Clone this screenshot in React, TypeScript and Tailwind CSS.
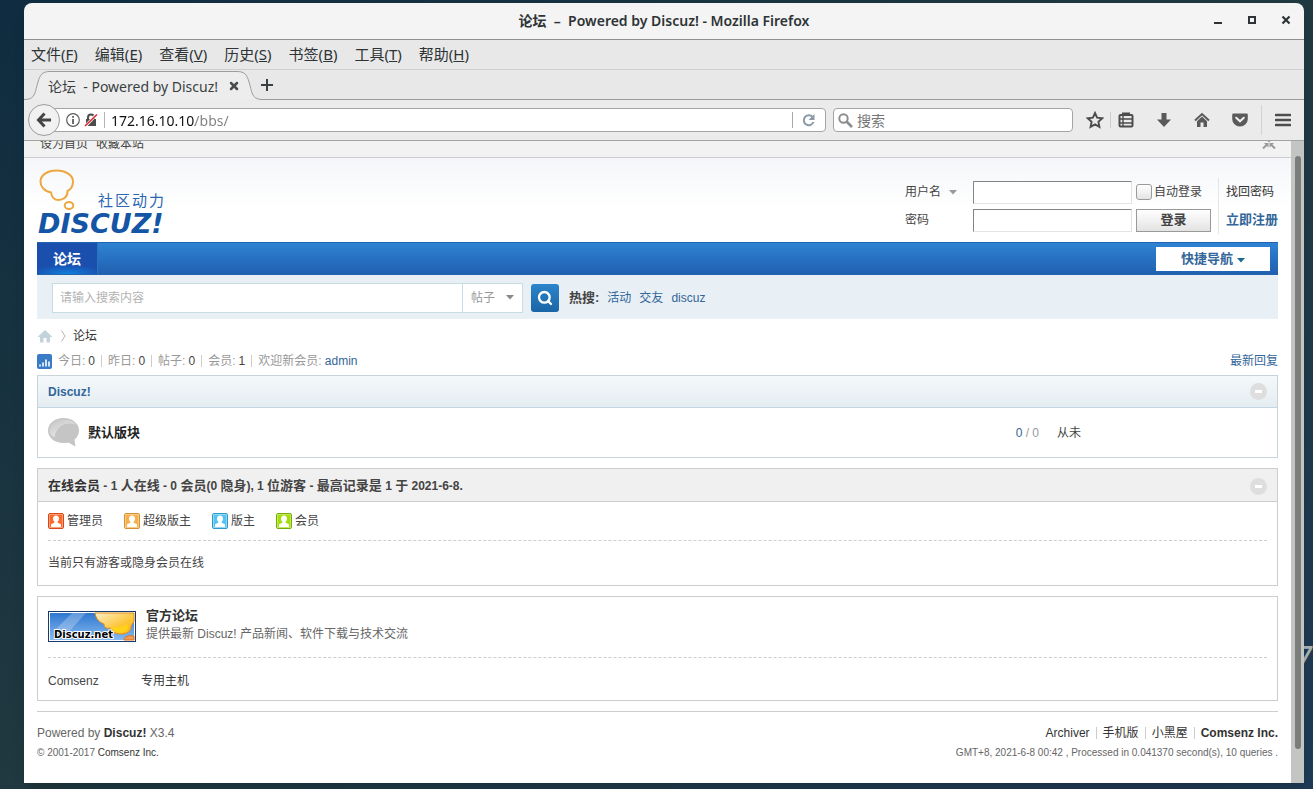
import type { ReactNode } from "react";
import { Search, X } from "lucide-react";

const menus = [
  { label: "文件", key: "F" },
  { label: "编辑", key: "E" },
  { label: "查看", key: "V" },
  { label: "历史", key: "S" },
  { label: "书签", key: "B" },
  { label: "工具", key: "T" },
  { label: "帮助", key: "H" },
];

const stats = [
  { label: "今日", value: 0 },
  { label: "昨日", value: 0 },
  { label: "帖子", value: 0 },
  { label: "会员", value: 1 },
];

const groups = [
  { name: "管理员", fill: "#fb6a2c", edge: "#d9481a" },
  { name: "超级版主", fill: "#f5b04c", edge: "#d58f35" },
  { name: "版主", fill: "#55c3f0", edge: "#3099cc" },
  { name: "会员", fill: "#a5dc0c", edge: "#74ad08" },
];

const TitleBar = () => (
  <header className="flex h-[37px] items-center border-b border-[#8f918f] bg-[#f4f4f4] pb-0.5 pl-[103px] pr-px">
    <h1 className="flex-1 text-center text-[14px] font-semibold text-[#2e3436]">
      论坛 &nbsp;– &nbsp;Powered by Discuz! - Mozilla Firefox
    </h1>
    <div className="flex">
      <button aria-label="最小化" className="flex w-[34px] justify-center">
        <svg width="10" height="10" viewBox="0 0 10 10"><path d="M1 8h8" stroke="#2e3436" strokeWidth="2" /></svg>
      </button>
      <button aria-label="最大化" className="flex w-[34px] justify-center">
        <svg width="10" height="10" viewBox="0 0 10 10"><path d="M2 2h6v6H2z" fill="none" stroke="#2e3436" strokeWidth="2" /></svg>
      </button>
      <button aria-label="关闭" className="flex w-[34px] justify-center">
        <svg width="10" height="10" viewBox="0 0 10 10"><path d="M1.500 1.500l7 7M8.500 1.500l-7 7" stroke="#2e3436" strokeWidth="2.200" /></svg>
      </button>
    </div>
  </header>
);

const MenuBar = () => (
  <nav className="flex h-[30px] items-center gap-[17px] border-b border-[#cfcfcf] bg-[#e8e8e8] px-[7px] text-[15px] text-[#2e3436]">
    {menus.map((m) => (
      <button key={m.key} className="whitespace-nowrap">
        {m.label}(<span className="underline">{m.key}</span>)
      </button>
    ))}
  </nav>
);

const TabBar = () => (
  <div className="flex h-[30px] bg-[#e8e8e8]">
    <div className="relative w-[238px]">
      <svg className="absolute inset-0" width="238" height="30" viewBox="0 0 238 30">
        <path
          d="M0 29.500H1C12 29.500 11 21 14 12C16 5 18 1.500 26 1.500H213C221 1.500 223 5 225 12C228 21 227 29.500 238 29.500"
          fill="#ededed"
          stroke="#9b9d9b"
        />
      </svg>
      <div className="relative flex h-full items-center justify-between pl-6 pr-[22px] pt-0.5">
        <span className="whitespace-nowrap text-[14px] text-[#3a3f41]">论坛 &nbsp;- Powered by Discuz!</span>
        <button aria-label="关闭标签页">
          <X className="h-3 w-3 text-[#4a4d4e]" strokeWidth={5} />
        </button>
      </div>
    </div>
    <div className="flex flex-1 items-center border-b border-[#9b9d9b]">
      <button aria-label="新建标签页" className="-ml-px">
        <svg width="12" height="12" viewBox="0 0 12 12"><path d="M6 0v12M0 6h12" stroke="#3a3f41" strokeWidth="2" /></svg>
      </button>
    </div>
  </div>
);

const ToolButton = ({ label, children }: { label: string; children: ReactNode }) => (
  <button aria-label={label} className="flex w-[38px] shrink-0 justify-center">
    {children}
  </button>
);

const NavBar = () => (
  <div className="flex h-[41px] items-center border-b border-[#a3a5a3] bg-[#ebebeb] pl-1 pr-0.5">
    <button
      aria-label="后退"
      className="z-10 flex h-8 w-8 shrink-0 items-center justify-center rounded-full border border-[#9c9e9c] bg-[#f1f1f1]"
    >
      <svg width="16" height="16" viewBox="0 0 16 16">
        <path d="M8.500 1.500L2.500 8l6 6.500M3 8h12" fill="none" stroke="#454545" strokeWidth="3" />
      </svg>
    </button>
    <div className="-ml-2 flex h-6 flex-1 items-center rounded-r-sm border border-[#a3a5a3] bg-white pl-[13px]">
      <svg width="14" height="14" viewBox="0 0 14 14" className="shrink-0">
        <circle cx="7" cy="7" r="6.300" fill="none" stroke="#5c5c5c" strokeWidth="1.200" />
        <path d="M7 6v5M7 3v1.800" stroke="#5c5c5c" strokeWidth="1.800" />
      </svg>
      <svg width="14" height="14" viewBox="0 0 14 14" className="ml-1 shrink-0">
        <path d="M2 6h10v7H2z" fill="#4d4d4d" />
        <path d="M4 7V4.500a3 3 0 0 1 6 0V7" fill="none" stroke="#4d4d4d" strokeWidth="2" />
        <path d="M1 13.500L13 1" stroke="#fff" strokeWidth="3" />
        <path d="M1 13L13 1.500" stroke="#d92b34" strokeWidth="1.600" />
      </svg>
      <span className="mx-[6px] h-4 w-px shrink-0 bg-[#b5b5b5]" />
      <input
        aria-label="网址"
        defaultValue="172.16.10.10/bbs/"
        className="min-w-0 flex-1 bg-linear-to-r from-[#111111] from-[84px] to-[#808080] to-[84px] bg-clip-text text-[14px] text-transparent outline-none"
      />
      <button aria-label="刷新" className="flex h-4 w-[33px] items-center justify-center border-l border-[#a8a8a8]">
        <svg width="14" height="14" viewBox="0 0 14 14">
          <path d="M11 4.500A5 5 0 1 0 11.500 9" fill="none" stroke="#8c99a8" strokeWidth="2" />
          <path d="M12.500 1v6h-6z" fill="#8c99a8" />
        </svg>
      </button>
    </div>
    <div className="ml-[7px] flex h-6 w-60 shrink-0 items-center gap-1 rounded-sm border border-[#a3a5a3] bg-white px-1">
      <svg width="15" height="15" viewBox="0 0 15 15">
        <circle cx="5.500" cy="5.500" r="4.200" fill="none" stroke="#8d8d8d" strokeWidth="2" />
        <path d="M8.500 8.500L14 14" stroke="#8d8d8d" strokeWidth="2.600" />
      </svg>
      <input aria-label="搜索" placeholder="搜索" className="min-w-0 flex-1 text-[14px] outline-none placeholder:text-[#757575]" />
    </div>
    <button aria-label="收藏" className="ml-[7px] flex w-[30px] shrink-0 justify-center">
      <svg width="18" height="18" viewBox="0 0 18 18">
        <path d="M9 2l2.100 4.700 5.100.6-3.800 3.500 1 5.100L9 13.400l-4.400 2.500 1-5.100L1.800 7.300l5.100-.6z" fill="none" stroke="#4d4d4d" strokeWidth="1.900" />
      </svg>
    </button>
    <span className="-mr-1 h-4 w-px bg-[#cccccc]" />
    <ToolButton label="书签列表">
      <svg width="16" height="16" viewBox="0 0 16 16">
        <path d="M5 3V1.500h6V3" fill="none" stroke="#4d4d4d" strokeWidth="2" />
        <rect x="1.500" y="3" width="13" height="11.500" rx="1" fill="none" stroke="#4d4d4d" strokeWidth="2" />
        <path d="M5 3v11M1 7h14M1 11h14" stroke="#4d4d4d" strokeWidth="1.400" />
      </svg>
    </ToolButton>
    <ToolButton label="下载">
      <svg width="16" height="16" viewBox="0 0 16 16"><path d="M5.500 1h5v6.500H15L8 15 1 7.500h4.500z" fill="#5a5a5a" /></svg>
    </ToolButton>
    <ToolButton label="主页">
      <svg width="16" height="16" viewBox="0 0 16 16">
        <path d="M1 8.500L8 2l7 6.500" fill="none" stroke="#5a5a5a" strokeWidth="2" />
        <path d="M8 4.500l5 4.700V15H9.500v-4.500h-3V15H3V9.200z" fill="#5a5a5a" />
      </svg>
    </ToolButton>
    <ToolButton label="Pocket">
      <svg width="16" height="16" viewBox="0 0 16 16">
        <path d="M1.500 1.500h13q1.300 0 1.300 1.300V7a7.800 7.600 0 0 1-15.600 0V2.800q0-1.300 1.300-1.300z" fill="#5a5a5a" />
        <path d="M4.200 5.700L8 9.300l3.800-3.600" fill="none" stroke="#f0f0f0" strokeWidth="2" strokeLinecap="round" />
      </svg>
    </ToolButton>
    <span className="mx-0.5 h-[30px] w-px bg-[#d2d2d2]" />
    <ToolButton label="打开菜单">
      <svg width="16" height="14" viewBox="0 0 16 14"><path d="M1 2h14M1 7h14M1 12h14" stroke="#4d4d4d" strokeWidth="2.600" strokeLinecap="round" /></svg>
    </ToolButton>
  </div>
);

const Logo = () => (
  <a href="#" aria-label="Discuz! 社区动力">
    <svg width="136" height="74" viewBox="0 0 136 74">
      <path
        d="M14 24.500C6 23 3.500 17.500 3.500 13.500C3.500 7 10.500 2.500 19.500 2.500S36 7 36 13.500C36 18 33.500 21.500 30.500 23C31 29 26 32 21.500 32C17.500 32 14.500 29 14 24.500z"
        fill="none"
        stroke="#eca741"
        strokeWidth="2"
      />
      <ellipse cx="32" cy="37.500" rx="4.300" ry="3.500" fill="none" stroke="#eca741" strokeWidth="2" />
      <text x="61" y="38" fontSize="15" letterSpacing="2" fill="#2a66b1" fontFamily="Noto Sans CJK SC, sans-serif">社区动力</text>
      <text x="1" y="65" fontSize="27" fontWeight="700" fontStyle="italic" fill="#1455a5" fontFamily="DejaVu Sans, sans-serif">DISCUZ!</text>
    </svg>
  </a>
);

const LoginForm = () => (
  <form className="flex" onSubmit={(e) => e.preventDefault()}>
    <div className="grid grid-cols-[68px_163px_75px] items-center">
      <div className="flex h-7 items-center">
        <select aria-label="登录方式" className="appearance-none text-[#444444]">
          <option>用户名</option>
          <option>UID</option>
        </select>
        <svg width="8" height="5" viewBox="0 0 8 5" className="ml-[7px]"><path d="M0 0h8L4 4.500z" fill="#999" /></svg>
      </div>
      <input aria-label="用户名" className="h-[23px] w-[159px] border border-[#e3e3e3] border-t-[#848484] border-l-[#848484] bg-white px-1" />
      <label className="flex items-center gap-0.5 whitespace-nowrap">
        <input type="checkbox" className="h-4 w-4 appearance-none rounded-[3px] border border-[#9a9a9a] bg-linear-to-b from-white to-[#e4e4e4]" />
        自动登录
      </label>
      <label htmlFor="password" className="flex h-7 items-center">密码</label>
      <input id="password" type="password" className="h-[23px] w-[159px] border border-[#e3e3e3] border-t-[#848484] border-l-[#848484] bg-white px-1" />
      <button className="h-[23px] border border-[#999999] bg-linear-to-b from-white to-[#e3e3e3] text-[13px] font-bold">登录</button>
    </div>
    <div className="ml-[7px] border-l border-[#e5e5e5] pl-[7px]">
      <a href="#" className="flex h-7 items-center text-[#333333]">找回密码</a>
      <a href="#" className="flex h-7 items-center text-[13px] font-bold text-[#336699]">立即注册</a>
    </div>
  </form>
);

const SearchBar = () => (
  <div className="flex h-11 items-center bg-[#e8eff5] pl-[15px] pt-px">
    <div className="flex h-[30px] items-center border border-[#c9dbe3] bg-white">
      <input aria-label="搜索内容" placeholder="请输入搜索内容" className="w-[409px] px-[7px] outline-none placeholder:text-[#b3b3b3]" />
      <div className="flex h-full items-center border-l border-[#c9dbe3] px-2">
        <select aria-label="搜索类型" className="appearance-none text-[#999999]">
          <option>帖子</option>
          <option>用户</option>
        </select>
        <svg width="8" height="5" viewBox="0 0 8 5" className="ml-[10px]"><path d="M0 0h8L4 4.500z" fill="#888" /></svg>
      </div>
    </div>
    <button aria-label="搜索" className="ml-2 flex h-7 w-7 items-center justify-center rounded-[3px] bg-linear-to-b from-[#2d85cb] to-[#1a65a6]">
      <Search className="h-4 w-4 text-white" strokeWidth={3.500} />
    </button>
    <div className="ml-[10px] flex items-center gap-2 text-[#336699]">
      <strong className="text-[13px] text-[#444444]">热搜:</strong>
      <a href="#">活动</a>
      <a href="#">交友</a>
      <a href="#">discuz</a>
    </div>
  </div>
);

const CollapseButton = () => (
  <button aria-label="收起/展开" className="mr-[10px]">
    <svg width="17" height="17" viewBox="0 0 17 17">
      <circle cx="8.500" cy="8.500" r="8.500" fill="#dedede" />
      <path d="M5 8.500h7" stroke="#fff" strokeWidth="3" />
    </svg>
  </button>
);

const GroupIcon = ({ fill, edge }: { fill: string; edge: string }) => (
  <svg width="16" height="16" viewBox="0 0 16 16">
    <rect x=".5" y=".5" width="15" height="15" rx="1.500" fill={fill} stroke={edge} />
    <rect x="1.500" y="1.500" width="13" height="13" fill="none" stroke="#fff" strokeOpacity=".35" />
    <path d="M8 2.500c2 0 3 1.400 3 3.200 0 1.300-.6 2.300-1.300 2.900v1.200l3.300 1.400V14H3v-2.800l3.300-1.400V8.600C5.600 8 5 7 5 5.700c0-1.800 1-3.200 3-3.200z" fill="#fff" />
  </svg>
);

const ForumPanel = () => (
  <section className="border border-[#c9d3d9]">
    <div className="flex h-8 items-center justify-between border-b border-[#c2d5e3] bg-linear-to-b from-[#f4f8fa] to-[#e5edf2] pl-[10px]">
      <h2 className="font-bold text-[#336699]"><a href="#">Discuz!</a></h2>
      <CollapseButton />
    </div>
    <table className="w-full table-fixed">
      <tbody>
        <tr className="h-[49px]">
          <td className="w-[50px] pl-[10px]">
            <svg width="31" height="29" viewBox="0 0 31 29">
              <defs>
                <linearGradient id="gloss" x1="0" y1="0" x2=".7" y2="1">
                  <stop offset="0" stopColor="#c4c4c4" />
                  <stop offset="1" stopColor="#ececec" />
                </linearGradient>
              </defs>
              <path d="M15.500 0C24.500 0 31 5.500 31 12.500c0 4-2 7-4.500 9.200L27.500 28.500l-7.300-4c-1.500.4-3 .5-4.700.5C6.500 25 0 19.500 0 12.500S6.500 0 15.500 0z" fill="#c5c5c5" />
              <path d="M1.500 12.500C1.500 6 8 1.500 15.500 1.500c6 0 10 2 12.500 5C20 3.500 8 7 6.500 19.500 3.500 18 1.500 15.500 1.500 12.500z" fill="url(#gloss)" />
            </svg>
          </td>
          <td><a href="#" className="text-[13px] font-bold text-[#222222]">默认版块</a></td>
          <td className="w-[120px] pr-[18px] text-right text-[#999999]"><span className="text-[#336699]">0</span> / 0</td>
          <td className="w-[220px]">从未</td>
        </tr>
      </tbody>
    </table>
  </section>
);

// Chinese runs of a heading are set a size larger than its Latin ones
const MixedText = ({ text }: { text: string }) => (
  <>
    {text.split(/([\u4e00-\u9fff]+)/).map((part, i) =>
      i % 2 === 1 ? <span key={i} className="text-[13px]">{part}</span> : part
    )}
  </>
);

const OnlinePanel = () => (
  <section className="mt-[10px] border border-[#cdcdcd]">
    <div className="flex h-[33px] items-center justify-between border-b border-[#cdcdcd] bg-[#f0f0f0] pl-[10px] pt-0.5">
      <h3 className="font-bold text-[#444444]">
        <a href="#" className="text-[#333333]"><MixedText text="在线会员" /></a>
        <MixedText text=" - 1 人在线 - 0 会员(0 隐身), 1 位游客 - 最高记录是 1 于 2021-6-8." />
      </h3>
      <CollapseButton />
    </div>
    <div className="px-[10px]">
      <ul className="flex h-[39px] items-center gap-[21px] border-b border-dashed border-[#cdcdcd]">
        {groups.map((g) => (
          <li key={g.name} className="flex items-center gap-[3px]">
            <GroupIcon fill={g.fill} edge={g.edge} />
            {g.name}
          </li>
        ))}
      </ul>
      <p className="flex h-11 items-center">当前只有游客或隐身会员在线</p>
    </div>
  </section>
);

const LinksPanel = () => (
  <section className="mt-[10px] border border-[#cdcdcd] px-[10px]">
    <div className="flex items-start gap-[10px] border-b border-dashed border-[#cdcdcd] pb-[14px] pt-[14px]">
      <svg width="88" height="32" viewBox="0 0 88 32">
        <defs>
          <linearGradient id="sky" x1="0" y1="0" x2="0" y2="1">
            <stop offset="0" stopColor="#2f78d0" />
            <stop offset="1" stopColor="#86b9f0" />
          </linearGradient>
          <linearGradient id="sun" x1="0" y1="0" x2="1" y2="1">
            <stop offset="0" stopColor="#fdeecb" />
            <stop offset=".6" stopColor="#fdc63c" />
            <stop offset="1" stopColor="#fbb010" />
          </linearGradient>
        </defs>
        <rect x=".5" y=".5" width="87" height="30" fill="#fff" stroke="#173a6c" />
        <rect x="2" y="2" width="84" height="27" fill="url(#sky)" />
        <path d="M24 2h14L18 24 6 20z" fill="#fff" fillOpacity=".25" />
        <path d="M47 2h39v9c-2 1-2 3-3 5 0 5-5 7-10 7-6 0-9-2-11-6-3 1-6 0-6-4-5-2-8-5-9-11z" fill="url(#sun)" stroke="#e08c1e" />
        <path d="M64 15c4 2 12 1 15-2 3 5-1 9-6 9-4 0-8-2-9-7z" fill="#ffd21a" />
        <path d="M76 29c0-4 5-5 10-4v4z" fill="#ee9a52" stroke="#d9722a" />
        <text x="6" y="27" fontSize="10" fontWeight="700" fontFamily="DejaVu Sans, sans-serif" fill="#000" stroke="#fff" strokeWidth="2" paintOrder="stroke">Discuz.net</text>
      </svg>
      <div className="-mt-1 leading-[18px]">
        <h4 className="text-[13px] font-bold text-[#333333]"><a href="#">官方论坛</a></h4>
        <p className="text-[#666666]">提供最新 Discuz! 产品新闻、软件下载与技术交流</p>
      </div>
    </div>
    <ul className="flex h-[42px] items-center pt-1">
      <li className="w-[93px]"><a href="#">Comsenz</a></li>
      <li><a href="#" className="text-[#333333]">专用主机</a></li>
    </ul>
  </section>
);

const Divider = () => <span className="h-3 w-px bg-[#cccccc]" />;

const Footer = () => (
  <footer className="mt-[10px] flex justify-between border-t border-[#cdcdcd] pb-4 pt-[11px] text-[#666666]">
    <div>
      <p className="leading-5">Powered by <strong className="text-[#333333]">Discuz!</strong> X3.4</p>
      <p className="text-[10px] leading-5">© 2001-2017 <a href="#" className="text-[#333333]">Comsenz Inc.</a></p>
    </div>
    <div className="text-right">
      <p className="flex h-5 items-center justify-end gap-[6px] text-[#333333]">
        <a href="#">Archiver</a>
        <Divider />
        <a href="#">手机版</a>
        <Divider />
        <a href="#">小黑屋</a>
        <Divider />
        <a href="#" className="font-bold">Comsenz Inc.</a>
      </p>
      <p className="text-[10px] leading-5">GMT+8, 2021-6-8 00:42 , Processed in 0.041370 second(s), 10 queries .</p>
    </div>
  </footer>
);

const ForumPage = () => (
  <div className='min-w-0 flex-1 bg-white font-["Liberation_Sans","Noto_Sans_CJK_SC",sans-serif] text-[12px] leading-4 text-[#444444]'>
    {/* page is scrolled a little, so the top strip shows only its lower part */}
    <div className="flex h-[17px] items-end justify-between overflow-hidden border-b border-[#cdcdcd] bg-[#f2f2f2] pl-4 pr-[15px]">
      <div className="flex gap-2 pb-[5px]">
        <a href="#">设为首页</a>
        <a href="#">收藏本站</a>
      </div>
      <svg width="14" height="8" viewBox="0 0 14 8" className="mb-2">
        <path d="M1 7.500l4-4M13 7.500l-4-4" stroke="#999" strokeWidth="2" />
        <path d="M2 2h4.500v4.500zM12 2H7.500v4.500zM5.500 0h3L7 1.500z" fill="#999" />
      </svg>
    </div>
    <div className="bg-linear-to-b from-[#f4f6f9] to-white to-[50px] px-[13px]">
      <div className="flex justify-between pb-2 pt-5">
        <div className="-my-[10px]"><Logo /></div>
        <LoginForm />
      </div>
      <nav className="flex h-[33px] items-center justify-between border-y border-[#2464ae] bg-linear-to-b from-[#2f83d3] to-[#2160b0] pr-2">
        <a href="#" className="flex h-full w-[61px] items-center justify-center border-r border-[#2a72c4] bg-radial-[60%_30%_at_50%_100%] from-[#0f80dd] to-[#1b4fae] text-[14px] font-bold text-white">
          论坛
        </a>
        <button className="flex h-6 w-[114px] items-center justify-center gap-1 bg-white text-[13px] font-bold text-[#336699]">
          快捷导航
          <svg width="8" height="5" viewBox="0 0 8 5" className="mt-1"><path d="M0 0h8L4 4.500z" fill="#1d6a92" /></svg>
        </button>
      </nav>
      <SearchBar />
      <div className="flex h-[34px] items-center">
        <svg width="16" height="16" viewBox="0 0 16 16">
          <path d="M8 2l7.500 7H13v5.500H9.500V10h-3v4.500H3V9H.5z" fill="#c3d3dc" />
        </svg>
        <svg width="5" height="12" viewBox="0 0 5 12" className="ml-2 mr-[7px]"><path d="M.5.500L4 6 .5 11.500" fill="none" stroke="#b5b5b5" /></svg>
        <a href="#" className="text-[#333333]">论坛</a>
      </div>
      <div className="flex h-4 items-center justify-between">
        <div className="flex items-center text-[#999999]">
          <svg width="15" height="15" viewBox="0 0 15 15" className="mr-[6px]">
            <rect width="15" height="15" rx="2" fill="#3a7bc8" />
            <path d="M3 12.500v-2M6 12.500V8.500M9 12.500V5.500M12 12.500V7.500" stroke="#fff" strokeWidth="1.600" />
          </svg>
          {stats.map((s) => (
            <span key={s.label} className="flex items-center">
              {s.label}:<em className="ml-[3px] not-italic text-[#444444]">{s.value}</em>
              <i className="mx-[6px] h-3 w-px bg-[#cccccc]" />
            </span>
          ))}
          <span>欢迎新会员: <a href="#" className="text-[#336699]">admin</a></span>
        </div>
        <a href="#" className="text-[#336699]">最新回复</a>
      </div>
      <main className="pt-[6px]">
        <ForumPanel />
        <OnlinePanel />
        <LinksPanel />
      </main>
      <Footer />
    </div>
  </div>
);

const App = () => {
  return (
    <div className="relative flex min-h-screen flex-col bg-linear-to-br from-[#0f2c40] via-[#20383f] to-[#1e3a55] pb-[6px] pl-6 pr-[9px] pt-[3px]">
      <span className='absolute bottom-[115px] right-0 font-["Lato"] text-[34px] italic leading-8 text-[#a9b3b4]'>7</span>
      <div className='relative flex flex-1 flex-col overflow-hidden rounded-t-lg font-["Noto_Sans","Noto_Sans_CJK_SC",sans-serif] shadow-lg'>
        <TitleBar />
        <MenuBar />
        <TabBar />
        <NavBar />
        <div className="flex flex-1">
          <ForumPage />
          <div className="flex w-[13px] flex-col items-center bg-[#c3c5c3] pb-[34px] pt-[15px]">
            <div className="w-[6px] flex-1 rounded-full bg-[#7b7d7b]" />
          </div>
        </div>
      </div>
    </div>
  );
};

export default App;
